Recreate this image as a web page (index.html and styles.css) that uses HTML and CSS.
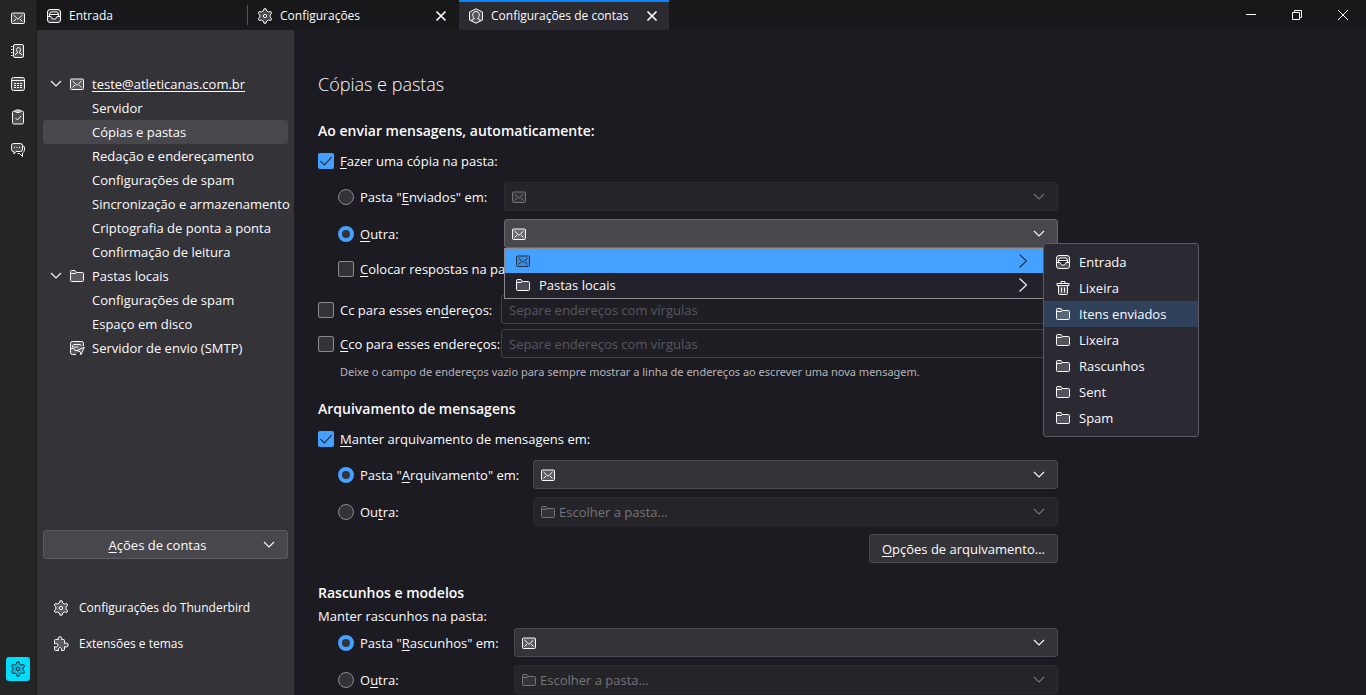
FILE: index.html
```html
<!DOCTYPE html>
<html lang="pt-BR">
<head>
<meta charset="utf-8">
<title>Configurações de contas</title>
<link rel="stylesheet" href="styles.css">
</head>
<body>
<svg class="sprite" aria-hidden="true">
  <symbol id="mail" viewBox="0 0 16 16"><rect class="soft" x="1.5" y="3" width="13" height="10.500" rx="1"/><path d="M3.500 5 8 9.300 12.500 5M3.500 11.500 6 9M12.500 11.500 10 9"/></symbol>
  <symbol id="book" viewBox="0 0 16 16"><rect class="soft" x="3.500" y="1.500" width="10" height="13" rx="1.500"/><path d="M1 3.500h1.500M1 6.500h1.500M1 9.500h1.500M1 12.500h1.500M5.500 12v-1l2-1V9C6 8 6.200 4.500 8.500 4.500S11 8 9.500 9v1l2 1v1"/></symbol>
  <symbol id="calendar" viewBox="0 0 16 16"><rect class="soft" x="1.500" y="1.500" width="13" height="13" rx="2"/><path d="M1.500 4.500h13"/><path d="M4 7.500h2M7 7.500h2M10 7.500h2M4 9.500h2M7 9.500h2M10 9.500h2M4 11.500h2M7 11.500h2M10 11.500h2"/></symbol>
  <symbol id="tasks" viewBox="0 0 16 16"><rect class="soft" x="2.500" y="2" width="11" height="13" rx="1.500"/><rect class="soft" x="5.500" y="1" width="5" height="2.500" rx="1"/><path d="m5.500 9 2 2 3.500-4"/></symbol>
  <symbol id="chat" viewBox="0 0 16 16"><path class="soft" d="M3.500 1.500h7a2 2 0 0 1 2 2v4a2 2 0 0 1-2 2H6l-2 2.500V9.500h-.5a2 2 0 0 1-2-2v-4a2 2 0 0 1 2-2z"/><path d="M13 3.500c2 1 2.300 6-.5 7.500v3.500L9.500 11.500H7.500M4 5.500h1M6.500 5.500h1M9 5.500h1"/></symbol>
  <symbol id="gear" viewBox="0 0 16 16"><path class="soft" d="M7 .8h2l.7 2.200 1.700 1 2.300-.5 1 1.700L13.100 7v2l1.600 1.800-1 1.700-2.300-.5-1.700 1L9 15.200H7L6.300 13l-1.700-1-2.300.5-1-1.700L2.900 9V7L1.300 5.200l1-1.700 2.300.5 1.700-1z"/><circle cx="8" cy="8" r="1.700"/></symbol>
  <symbol id="inbox" viewBox="0 0 16 16"><rect class="soft" x="1.500" y="1.500" width="13" height="13" rx="2.500"/><path class="hollow" d="M2 8.500h3l1.500 2.500h3L11 8.500h3M3.500 8V6l1.500-2h6l1.500 2v2M4 6.500h8"/></symbol>
  <symbol id="account" viewBox="0 0 16 16"><path class="soft" d="M8 .8 14.500 4v8L8 15.200 1.500 12V4z"/><path d="M4 13v-1.500l2.500-1C3.500 8 4.500 3.500 8 3.500s4.500 4.500 1.500 7l2.500 1V13"/></symbol>
  <symbol id="folder" viewBox="0 0 16 16"><path class="soft" d="M1.500 12.500v-9a1 1 0 0 1 1-1h3.500L7.500 4.500h6a1 1 0 0 1 1 1v7a1 1 0 0 1-1 1h-11a1 1 0 0 1-1-1z"/><path d="M1.500 5.500H6l1.500-1"/></symbol>
  <symbol id="trash" viewBox="0 0 16 16"><path class="soft" d="M3.500 5.500h9v8a1 1 0 0 1-1 1h-7a1 1 0 0 1-1-1z"/><path d="M2 3.500h12v2H2zM6 3V1.500h4V3M6.500 7.500v5M9.500 7.500v5"/></symbol>
  <symbol id="outbox" viewBox="0 0 16 16"><path class="soft" d="M7 14.500H3.500a2 2 0 0 1-2-2v-9a2 2 0 0 1 2-2h9a2 2 0 0 1 2 2V6"/><path d="M2 8.500h3l1 2h2M3.500 7.500v-2l1.500-1h6l1.500 1M4.500 7h5"/><path class="soft" d="m15.300 7.200-7.500 3.300 3.200 1.200 1 3z"/></symbol>
  <symbol id="puzzle" viewBox="0 0 16 16"><path class="soft" d="M1.500 6V4.500a1 1 0 0 1 1-1h3C4.500 2 5.500.7 7 .7S9.500 2 8.500 3.500h2a1 1 0 0 1 1 1v3C13 6.500 15.300 7 15.300 9s-2.300 2.500-3.800 1.500v3a1 1 0 0 1-1 1H8.500V13c0-2-3-2-3 0v1.500h-3a1 1 0 0 1-1-1v-3c1.500 1 3.500.5 3.500-1.300S3 7 1.500 8z"/></symbol>
  <symbol id="down" viewBox="0 0 16 16"><path class="bold" d="m3 5 5 5 5-5"/></symbol>
  <symbol id="right" viewBox="0 0 16 16"><path class="bold" d="m4.500 1.500 7 6.500-7 6.500"/></symbol>
  <symbol id="close" viewBox="0 0 16 16"><path class="thick" d="m3.500 3.500 9 9M12.500 3.500l-9 9"/></symbol>
  <symbol id="minimize" viewBox="0 0 16 16"><path d="M3 7.500h10"/></symbol>
  <symbol id="restore" viewBox="0 0 16 16"><path d="M3.500 5.500h7v7h-7zM5.500 5.500v-2h7v7h-2"/></symbol>
  <symbol id="exit" viewBox="0 0 16 16"><path d="m3 3 10 10M13 3 3 13"/></symbol>
</svg>

<nav class="spaces" aria-label="Espaços">
  <button aria-label="E-mail"><svg class="icon"><use href="#mail"/></svg></button>
  <button aria-label="Catálogo de endereços"><svg class="icon"><use href="#book"/></svg></button>
  <button aria-label="Agenda"><svg class="icon"><use href="#calendar"/></svg></button>
  <button aria-label="Tarefas"><svg class="icon"><use href="#tasks"/></svg></button>
  <button aria-label="Bate-papo"><svg class="icon"><use href="#chat"/></svg></button>
  <button class="current" aria-label="Configurações"><svg class="icon"><use href="#gear"/></svg></button>
</nav>

<div class="window">
  <header class="titlebar">
    <div class="tab"><svg class="icon"><use href="#inbox"/></svg><span>Entrada</span></div>
    <div class="tab divided"><svg class="icon"><use href="#gear"/></svg><span>Configurações</span><button aria-label="Fechar aba"><svg class="icon"><use href="#close"/></svg></button></div>
    <div class="tab active"><svg class="icon"><use href="#account"/></svg><span>Configurações de contas</span><button aria-label="Fechar aba"><svg class="icon"><use href="#close"/></svg></button></div>
    <div class="controls">
      <button aria-label="Minimizar"><svg class="icon"><use href="#minimize"/></svg></button>
      <button aria-label="Restaurar"><svg class="icon"><use href="#restore"/></svg></button>
      <button aria-label="Fechar"><svg class="icon"><use href="#exit"/></svg></button>
    </div>
  </header>

  <div class="workspace">
    <aside class="sidebar">
      <ul class="tree">
        <li><a href="#" class="root"><svg class="icon"><use href="#down"/></svg><svg class="icon"><use href="#mail"/></svg><span class="underlined">teste@atleticanas.com.br</span></a></li>
        <li><a href="#">Servidor</a></li>
        <li><a href="#" class="selected" aria-current="page">Cópias e pastas</a></li>
        <li><a href="#">Redação e endereçamento</a></li>
        <li><a href="#">Configurações de spam</a></li>
        <li><a href="#">Sincronização e armazenamento</a></li>
        <li><a href="#">Criptografia de ponta a ponta</a></li>
        <li><a href="#">Confirmação de leitura</a></li>
        <li><a href="#" class="root"><svg class="icon"><use href="#down"/></svg><svg class="icon"><use href="#folder"/></svg><span>Pastas locais</span></a></li>
        <li><a href="#">Configurações de spam</a></li>
        <li><a href="#">Espaço em disco</a></li>
        <li><a href="#" class="root leaf"><svg class="icon"><use href="#outbox"/></svg><span>Servidor de envio (SMTP)</span></a></li>
      </ul>
      <button class="actions"><span><u>A</u>ções de contas</span><svg class="icon"><use href="#down"/></svg></button>
      <div class="shortcuts">
        <a href="#"><svg class="icon"><use href="#gear"/></svg>Configurações do Thunderbird</a>
        <a href="#"><svg class="icon"><use href="#puzzle"/></svg>Extensões e temas</a>
      </div>
    </aside>

    <main class="pane">
      <h1>Cópias e pastas</h1>

      <section>
        <h2>Ao enviar mensagens, automaticamente:</h2>
        <label class="check"><input type="checkbox" checked><span><u>F</u>azer uma cópia na pasta:</span></label>
        <div class="rows copies">
          <label class="choice"><input type="radio" name="sent"><span>Pasta "<u>E</u>nviados" em:</span></label>
          <div class="picker"><select disabled aria-label="Conta da pasta Enviados"><option></option></select><svg class="icon lead"><use href="#mail"/></svg><svg class="icon caret"><use href="#down"/></svg></div>
          <label class="choice"><input type="radio" name="sent" checked><span><u>O</u>utra:</span></label>
          <div class="picker open">
            <select aria-label="Outra pasta para cópias"><option></option></select><svg class="icon lead"><use href="#mail"/></svg><svg class="icon caret"><use href="#down"/></svg>
            <div class="popup" role="menu">
              <button class="hot" role="menuitem" aria-label="Conta"><svg class="icon"><use href="#mail"/></svg><span></span><svg class="icon"><use href="#right"/></svg></button>
              <button role="menuitem"><svg class="icon"><use href="#folder"/></svg><span>Pastas locais</span><svg class="icon"><use href="#right"/></svg></button>
              <div class="submenu" role="menu">
                <button role="menuitem"><svg class="icon"><use href="#inbox"/></svg>Entrada</button>
                <button role="menuitem"><svg class="icon"><use href="#trash"/></svg>Lixeira</button>
                <button role="menuitem" class="hover"><svg class="icon"><use href="#folder"/></svg>Itens enviados</button>
                <button role="menuitem"><svg class="icon"><use href="#folder"/></svg>Lixeira</button>
                <button role="menuitem"><svg class="icon"><use href="#folder"/></svg>Rascunhos</button>
                <button role="menuitem"><svg class="icon"><use href="#folder"/></svg>Sent</button>
                <button role="menuitem"><svg class="icon"><use href="#folder"/></svg>Spam</button>
              </div>
            </div>
          </div>
        </div>
        <label class="check nested"><input type="checkbox"><span><u>C</u>olocar respostas na pasta</span></label>
        <div class="addresses">
          <label class="check"><input type="checkbox"><span>Cc para esses en<u>d</u>ereços:</span></label>
          <input type="text" placeholder="Separe endereços com vírgulas" aria-label="Endereços Cc">
          <label class="check"><input type="checkbox"><span><u>C</u>co para esses endereços:</span></label>
          <input type="text" placeholder="Separe endereços com vírgulas" aria-label="Endereços Cco">
        </div>
        <p class="note">Deixe o campo de endereços vazio para sempre mostrar a linha de endereços ao escrever uma nova mensagem.</p>
      </section>

      <section>
        <h2>Arquivamento de mensagens</h2>
        <label class="check"><input type="checkbox" checked><span><u>M</u>anter arquivamento de mensagens em:</span></label>
        <div class="rows archives">
          <label class="choice"><input type="radio" name="archive" checked><span>Pasta "<u>A</u>rquivamento" em:</span></label>
          <div class="picker"><select aria-label="Conta da pasta Arquivamento"><option></option></select><svg class="icon lead"><use href="#mail"/></svg><svg class="icon caret"><use href="#down"/></svg></div>
          <label class="choice"><input type="radio" name="archive"><span>Ou<u>t</u>ra:</span></label>
          <div class="picker"><select disabled aria-label="Outra pasta para arquivamento"><option>Escolher a pasta...</option></select><svg class="icon lead"><use href="#folder"/></svg><svg class="icon caret"><use href="#down"/></svg></div>
        </div>
        <div class="buttons"><button><u>O</u>pções de arquivamento...</button></div>
      </section>

      <section>
        <h2>Rascunhos e modelos</h2>
        <p class="intro">Manter rascunhos na pasta:</p>
        <div class="rows drafts">
          <label class="choice"><input type="radio" name="draft" checked><span>Pasta "<u>R</u>ascunhos" em:</span></label>
          <div class="picker"><select aria-label="Conta da pasta Rascunhos"><option></option></select><svg class="icon lead"><use href="#mail"/></svg><svg class="icon caret"><use href="#down"/></svg></div>
          <label class="choice"><input type="radio" name="draft"><span>O<u>u</u>tra:</span></label>
          <div class="picker"><select disabled aria-label="Outra pasta para rascunhos"><option>Escolher a pasta...</option></select><svg class="icon lead"><use href="#folder"/></svg><svg class="icon caret"><use href="#down"/></svg></div>
        </div>
      </section>
    </main>
  </div>
</div>
</body>
</html>
```
FILE: styles.css
```css
* { box-sizing: border-box; }
:root { --text: #fbfbfe; --accent: #45a1ff; --control: #343338; --line: #4b4a51; }
body {
  margin: 0; height: 100vh; display: flex; overflow: hidden;
  background: #1c1b22; color: var(--text);
  font: 13px/20px "Open Sans", "Noto Sans", sans-serif;
}
button, select, input { font: inherit; color: inherit; margin: 0; }
button { border: 0; padding: 0; background: none; }
a { color: inherit; text-decoration: none; }
u, .underlined { text-decoration: underline; text-underline-offset: 2px; text-decoration-thickness: 1px; text-decoration-skip-ink: none; }
ul, h1, h2, p { margin: 0; padding: 0; list-style: none; }
.sprite { position: absolute; width: 0; height: 0; }
.icon { width: 16px; height: 16px; flex: none; display: block; fill: none; stroke: currentColor; stroke-width: 1; }
.soft { fill: currentColor; fill-opacity: .2; }
.hollow { fill: #1c1b22; }
.bold { stroke-width: 1.1; }
.thick { stroke-width: 1.7; }

.spaces {
  width: 37px; flex: none; display: flex; flex-direction: column; align-items: center; gap: 9px;
  padding: 6px 1px 14px 0; background: #252525; border-right: 1px solid #1d1d1f;
}
.spaces button { width: 24px; height: 24px; display: grid; place-items: center; border-radius: 3px; }
.spaces .current { margin-top: auto; background: #00ddff; color: #14303c; }

.window { flex: 1; min-width: 0; display: flex; flex-direction: column; }
.titlebar { height: 30px; flex: none; display: flex; background: #18181a; font-size: 12px; }
.tab { width: 210px; display: flex; align-items: center; gap: 7px; padding: 2px 9px 0; position: relative; }
.tab span { flex: 1; white-space: nowrap; }
.tab.divided { width: 212px; padding: 2px 10px 0; }
.tab.divided::before { content: ""; position: absolute; left: 0; top: 5px; height: 20px; width: 1px; background: #55555a; }
.tab.active { background: #2b2a31; border-top: 2px solid #0a84ff; padding-top: 0; }
.controls { margin-left: auto; display: flex; }
.controls button { width: 46px; display: grid; place-items: center; }

.workspace { flex: 1; min-height: 0; display: flex; }
.sidebar { width: 257px; flex: none; background: #343338; padding: 42px 6px 35px; display: flex; flex-direction: column; }
.tree a { display: flex; align-items: center; height: 24px; padding-left: 49px; border-radius: 3px; white-space: nowrap; }
.tree .root { padding-left: 5px; gap: 5px; }
.tree .root .icon + span { margin-left: 2px; }
.tree .leaf { padding-left: 26px; }
.tree .selected { background: #48474c; }
.actions { margin-top: auto; height: 29px; flex: none; display: flex; align-items: center; padding: 0 10px; background: #48474c; border: 1px solid #5b5a60; border-radius: 3px; }
.actions span { flex: 1; }
.shortcuts { margin-top: 33px; display: grid; gap: 4px; font-size: 12px; }
.shortcuts a { display: flex; align-items: center; gap: 10px; height: 32px; padding-left: 10px; }

.pane { flex: 1; min-width: 0; padding: 40px 24px 0; }
.pane > * { max-width: 740px; }
h1 { font-size: 18px; line-height: 28px; font-weight: 300; margin-bottom: 23px; }
h2 { font-size: 14px; line-height: 20px; font-weight: 600; }
section + section { margin-top: 17px; }
.check, .choice { display: flex; align-items: center; gap: 6px; white-space: nowrap; }
.check { height: 21px; margin-top: 9px; }
input[type="checkbox"], input[type="radio"] { appearance: none; width: 16px; height: 16px; flex: none; background: #343338; border: 1px solid #8a898f; border-radius: 2px; }
input[type="radio"] { border-radius: 50%; }
input[type="radio"]:checked { border: 4px solid var(--accent); }
input[type="checkbox"]:checked { border: 0; background: var(--accent); display: grid; place-items: center; }
input[type="checkbox"]:checked::after { content: ""; width: 5px; height: 10px; margin-bottom: 3px; border: solid #1c1b22; border-width: 0 1px 1px 0; transform: rotate(42deg); }
.rows { display: grid; gap: 8px 0; margin: 11px 0 0 20px; grid-auto-rows: 29px; }
.copies { grid-template-columns: 166px 1fr; }
.archives { grid-template-columns: 195px 1fr; }
.drafts { grid-template-columns: 176px 1fr; margin-top: 2px; }
.picker { position: relative; }
.picker select { appearance: none; width: 100%; height: 29px; padding: 0 30px 0 25px; background: #343338; border: 1px solid var(--line); border-radius: 3px; opacity: 1; }
.picker select:disabled { background: #252429; border-color: #2c2b31; color: #76757a; }
.picker select:disabled ~ .icon { color: #76757a; }
.picker > .icon { position: absolute; top: 7px; pointer-events: none; }
.picker .lead { left: 7px; }
.picker .caret { right: 11px; }
.picker.open select { background: #48474c; border-color: #68676d; }
.popup { position: absolute; z-index: 2; top: 29px; left: 0; right: 15px; padding-bottom: 1px; border: 1px solid #8a898f; border-right: 0; background: #23222b; }
.popup button { width: 100%; display: flex; align-items: center; gap: 8px; height: 24px; padding: 0 12px 0 10px; text-align: left; }
.popup > button span { flex: 1; }
.popup .hot { background: var(--accent); color: #1d3450; }
.popup .submenu { position: absolute; top: -6px; left: 100%; width: 156px; padding: 5px 0; background: #2b2a33; border: 1px solid #5b5a62; border-radius: 3px; }
.submenu button { height: 26px; padding: 0 0 0 11px; }
.submenu .hover { background: #2f415b; }
.check.nested { margin: 10px 0 0 20px; }
.addresses { display: grid; grid-template-columns: 183px 1fr; gap: 5px 0; margin-top: 16px; align-items: center; }
.addresses .check { margin: 0; }
input[type="text"] { width: 100%; height: 29px; padding: 0 7px; background: #1f1e25; border: 1px solid #424147; border-radius: 3px; }
::placeholder { color: #59585e; opacity: 1; }
.note { margin: 4px 0 0 22px; font-family: "Noto Sans", sans-serif; font-size: 11px; line-height: 20px; color: #b5b4b9; }
.buttons { display: flex; justify-content: flex-end; margin: 8px 0 20px; }
.buttons button { height: 29px; padding: 0 12px; background: #343338; border: 1px solid var(--line); border-radius: 3px; }
.intro { margin-top: 3px; }
```
